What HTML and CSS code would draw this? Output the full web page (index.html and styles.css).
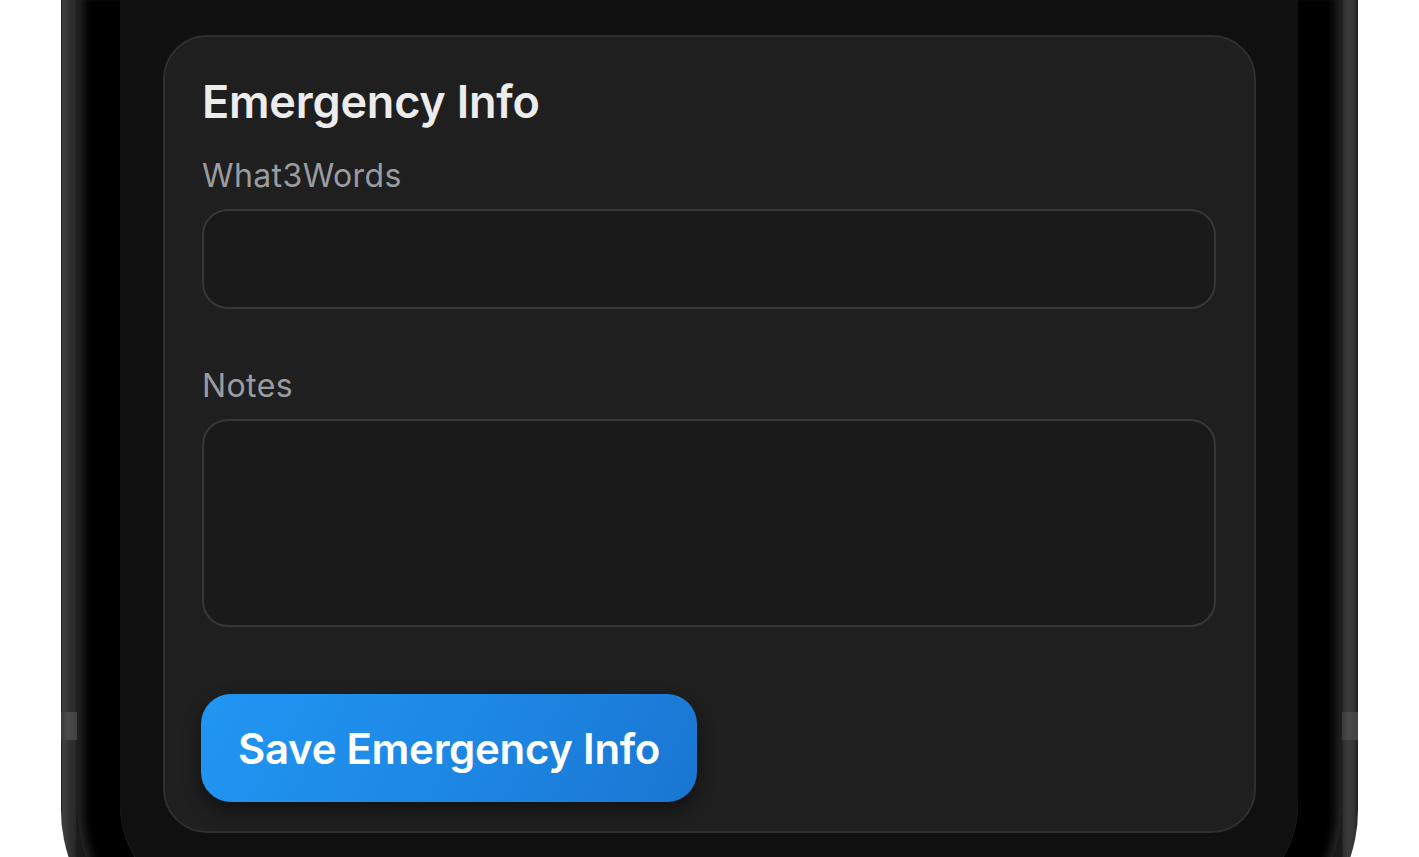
FILE: index.html
```html
<!DOCTYPE html>
<html lang="en">
<head>
<meta charset="utf-8">
<title>Emergency Info</title>
<link rel="stylesheet" href="styles.css">
</head>
<body>
<div class="phone">
  <span class="side-btn side-btn-left"></span>
  <span class="side-btn side-btn-right"></span>
  <div class="bezel">
    <div class="screen">
      <section class="card">
        <h2 class="card-title">Emergency Info</h2>
        <label class="field-label" for="w3w">What3Words</label>
        <input class="field-input" id="w3w" type="text">
        <label class="field-label field-label-notes" for="notes">Notes</label>
        <textarea class="field-textarea" id="notes"></textarea>
        <button class="save-btn" type="button">Save Emergency Info</button>
      </section>
    </div>
  </div>
</div>
</body>
</html>
```
FILE: styles.css
```css
* { box-sizing: border-box; }

html, body {
  margin: 0;
  padding: 0;
  background: #ffffff;
  height: 857px;
  overflow: hidden;
  font-family: "Inter", "Noto Sans", "Liberation Sans", sans-serif;
}

.phone {
  position: relative;
  margin-left: 61px;
  width: 1297px;
  padding: 0 16px 16px 16px;
  border-radius: 0 0 150px 150px;
  background-color: #2c2c2c;
  background-image: linear-gradient(to right,
    #1e1e1e 0px, #3f3f3f 2px, #3a3a3a 5px, #303030 9px, #2a2a2a 14px, #1a1a1a 16px,
    #1a1a1a calc(100% - 16px), #2e2e2e calc(100% - 15px), #3b3b3b calc(100% - 10px),
    #353535 calc(100% - 4px), #1e1e1e 100%);
}

.side-btn {
  position: absolute;
  top: 712px;
  width: 16px;
  height: 28px;
  background: linear-gradient(to right, #3a3a3a, #4a4a4a 40%, #424242);
}
.side-btn-left { left: 0; }
.side-btn-right { right: 0; }

.bezel {
  background: #000000;
  padding: 0 44px 40px 43px;
  border-radius: 0 0 134px 134px;
  box-shadow: inset 12px 0 10px -6px #262626, inset -12px 0 10px -6px #262626;
}

.screen {
  background: #101010;
  padding: 35px 42px 71px 43px;
  border-radius: 0 0 100px 100px;
  box-shadow: 0 1px 0 0 rgba(255, 255, 255, 0.18);
}

.card {
  display: flex;
  flex-direction: column;
  align-items: stretch;
  background: #1f1f1f;
  border: 2px solid #2f2f2f;
  border-radius: 44px;
  padding: 38px 38px 29px 37px;
}

.card-title {
  margin: 0 0 27px 0;
  font-size: 45px;
  line-height: 54px;
  font-weight: 600;
  color: #ececec;
  letter-spacing: -0.2px;
}

.field-label {
  display: block;
  font-size: 32px;
  line-height: 40px;
  font-weight: 400;
  color: #9a9ca1;
  letter-spacing: 0.4px;
  margin-bottom: 13px;
}

.field-label-notes {
  margin-top: 57px;
  margin-bottom: 13px;
}

.field-input,
.field-textarea {
  display: block;
  width: 100%;
  margin: 0;
  background: #1a1a1a;
  border: 2px solid #373737;
  border-radius: 26px;
  color: #ececec;
  font: inherit;
  font-size: 32px;
  padding: 0 28px;
  outline: none;
}

.field-input { height: 100px; }

.field-textarea {
  height: 208px;
  resize: none;
  padding: 24px 28px;
}

.save-btn {
  align-self: flex-start;
  margin-top: 67px;
  margin-left: -1px;
  width: 496px;
  height: 108px;
  border: none;
  border-radius: 30px;
  background: linear-gradient(120deg, #2196f3 0%, #1e88e5 50%, #1976d2 100%);
  color: #ffffff;
  font-family: inherit;
  font-size: 42px;
  font-weight: 600;
  letter-spacing: -0.3px;
  box-shadow: 0 8px 18px rgba(0, 0, 0, 0.45);
  cursor: pointer;
}
```
